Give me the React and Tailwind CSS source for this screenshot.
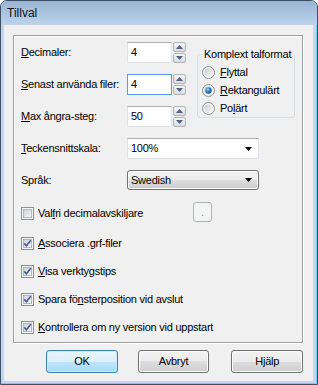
const font = { fontFamily: '"Liberation Sans", Arial, sans-serif' };

const CheckBox = ({ checked }) => (
  <svg width="13" height="13" viewBox="0 0 13 13" className="shrink-0">
    <defs>
      <linearGradient id="cbg" x1="0" y1="0" x2="1" y2="1">
        <stop offset="0" stopColor="#cbcfd5" />
        <stop offset="1" stopColor="#f7f7f7" />
      </linearGradient>
    </defs>
    <rect x="0.5" y="0.5" width="12" height="12" fill="#f4f4f4" stroke="#8e8f8f" />
    <rect x="2.5" y="2.5" width="8" height="8" fill="url(#cbg)" stroke="#b4b9bf" />
    {checked && (
      <path d="M3.2 6.4 L5.4 8.8 L9.8 3.2" fill="none" stroke="#4a5f97" strokeWidth="1.7" />
    )}
  </svg>
);

const Radio = ({ checked }) => (
  <svg width="13" height="13" viewBox="0 0 13 13" className="shrink-0">
    <defs>
      <linearGradient id="rbg" x1="0" y1="0" x2="1" y2="1">
        <stop offset="0" stopColor="#c9ccd1" />
        <stop offset="1" stopColor="#f8f8f8" />
      </linearGradient>
      <radialGradient id="rdot" cx="0.4" cy="0.35" r="0.7">
        <stop offset="0" stopColor="#a9dcf6" />
        <stop offset="0.5" stopColor="#2a7dc4" />
        <stop offset="1" stopColor="#0d4c8f" />
      </radialGradient>
    </defs>
    <circle cx="6.5" cy="6.5" r="6" fill="#f4f4f4" stroke="#8e8f8f" />
    <circle cx="6.5" cy="6.5" r="4" fill="url(#rbg)" />
    {checked && <circle cx="6.5" cy="6.5" r="3.2" fill="url(#rdot)" />}
  </svg>
);

const Arrow = () => (
  <svg width="8" height="4" viewBox="0 0 8 4">
    <path d="M0 0 H7 L3.5 4 Z" fill="#000" />
  </svg>
);

const Spinner = () => (
  <div className="ml-[1px] flex flex-col gap-[1px]">
    {[0, 1].map((i) => (
      <div
        key={i}
        className="w-[13px] h-[10px] border border-[#b0b4b9] rounded-[2px] bg-[linear-gradient(to_bottom,#f4f4f4,#dcdcdc)] flex items-center justify-center"
      >
        <svg width="7" height="4" viewBox="0 0 7 4">
          <path d={i === 0 ? 'M0 4 H7 L3.5 0 Z' : 'M0 0 H7 L3.5 4 Z'} fill="#4d6185" />
        </svg>
      </div>
    ))}
  </div>
);

const SpinRow = ({ label, value, focused }) => (
  <div className="flex items-center h-[21px]">
    <div className="w-[106px]">{label}</div>
    <div
      className={`w-[45px] h-[21px] bg-white border flex items-center pl-[3px] ${
        focused ? 'border-[#569de5]' : 'border-[#e2e3ea] border-t-[#abadb3]'
      }`}
    >
      {value}
    </div>
    <Spinner />
  </div>
);

const CheckRow = ({ checked, children }) => (
  <div className="flex items-center h-[28px]">
    <CheckBox checked={checked} />
    <span className="ml-[4px]">{children}</span>
  </div>
);

const Button = ({ children, primary, className }) => (
  <div
    className={`w-[72px] h-[23px] rounded-[3px] border flex items-center justify-center ${
      primary
        ? 'border-[#3c7fb1] bg-[linear-gradient(to_bottom,#eaf6fd_0%,#d9f0fc_50%,#bee6fd_50%,#a7d9f5_100%)] shadow-[inset_0_0_0_1px_#c8ecfc]'
        : 'border-[#707070] bg-[linear-gradient(to_bottom,#f2f2f2_0%,#ebebeb_50%,#dddddd_50%,#cfcfcf_100%)] shadow-[inset_0_0_0_1px_#fcfcfc]'
    } ${className || ''}`}
  >
    {children}
  </div>
);

export default function App() {
  return (
    <div
      style={font}
      className="w-[318px] h-[385px] flex flex-col bg-[#c2d7ee] border border-[#3d4f63] rounded-t-[7px] overflow-hidden text-[11px] tracking-[-0.25px] text-black shadow-[inset_-1px_-1px_0_#6fd0f0]"
    >
      <div className="h-[24px] shrink-0 bg-[linear-gradient(to_bottom,#9ab5d3,#bcd3ec)] flex items-center pl-[6px] text-[12px] tracking-normal text-[#111]">
        Tillval
      </div>
      <div className="flex-1 ml-[3px] mr-[4px] mb-[3px] bg-[#f0f0f0] pt-[10px] pl-[9px] pr-[10px]">
        <div className="h-[308px] border border-[#a0a0a0] shadow-[inset_1px_1px_0_#fff,1px_1px_0_#fff] pt-[6px] pl-[7px]">
          <div className="flex">
            <div className="flex flex-col gap-[11px]">
              <SpinRow label={<><u>D</u>ecimaler:</>} value="4" />
              <SpinRow label={<><u>S</u>enast använda filer:</>} value="4" focused />
              <SpinRow label={<><u>M</u>ax ångra-steg:</>} value="50" />
            </div>
            <fieldset className="ml-[11px] mt-[6px] w-[98px] h-[70px] min-w-0 border border-[#d5dfe5] rounded-[3px] p-0 m-0">
              <legend className="ml-[5px] px-[1px] leading-[13px]">Komplext talformat</legend>
              <div className="pt-[2px] pl-[4px]">
                <div className="flex items-center h-[18px]">
                  <Radio />
                  <span className="ml-[5px]"><u>F</u>lyttal</span>
                </div>
                <div className="flex items-center h-[18px]">
                  <Radio checked />
                  <span className="ml-[5px]"><u>R</u>ektangulärt</span>
                </div>
                <div className="flex items-center h-[18px]">
                  <Radio />
                  <span className="ml-[5px]">Po<u>l</u>ärt</span>
                </div>
              </div>
            </fieldset>
          </div>

          <div className="flex items-center h-[21px] mt-[11px]">
            <div className="w-[106px]"><u>T</u>eckensnittskala:</div>
            <div className="w-[132px] h-[21px] bg-white border border-[#e2e3ea] border-t-[#abadb3] flex items-center justify-between pl-[3px] pr-[5px]">
              <span>100%</span>
              <Arrow />
            </div>
          </div>

          <div className="flex items-center h-[20px] mt-[11px]">
            <div className="w-[106px]">Språk:</div>
            <div className="w-[132px] h-[20px] rounded-[3px] border border-[#707070] bg-[linear-gradient(to_bottom,#f2f2f2_0%,#ebebeb_50%,#dddddd_50%,#cfcfcf_100%)] shadow-[inset_0_0_0_1px_#fcfcfc] flex items-center justify-between pl-[3px] pr-[5px]">
              <span>Swedish</span>
              <Arrow />
            </div>
          </div>

          <div className="flex items-center h-[22px] mt-[12px]">
            <div className="w-[172px] flex items-center">
              <CheckBox />
              <span className="ml-[4px]">Val<u>f</u>ri decimalavskiljare</span>
            </div>
            <div className="self-start w-[19px] h-[20px] rounded-[3px] border border-[#adb2b5] bg-[#f4f4f4] flex items-center justify-center text-[#8d8d8d]">
              .
            </div>
          </div>

          <div className="mt-[5px]">
            <CheckRow checked><u>A</u>ssociera .grf-filer</CheckRow>
            <CheckRow checked><u>V</u>isa verktygstips</CheckRow>
            <CheckRow checked>Spara fö<u>n</u>sterposition vid avslut</CheckRow>
            <CheckRow checked><u>K</u>ontrollera om ny version vid uppstart</CheckRow>
          </div>
        </div>

        <div className="flex mt-[7px] pl-[33px]">
          <Button primary>OK</Button>
          <Button className="ml-[20px]">Avbryt</Button>
          <Button className="ml-[22px]">Hjälp</Button>
        </div>
      </div>
    </div>
  );
}
